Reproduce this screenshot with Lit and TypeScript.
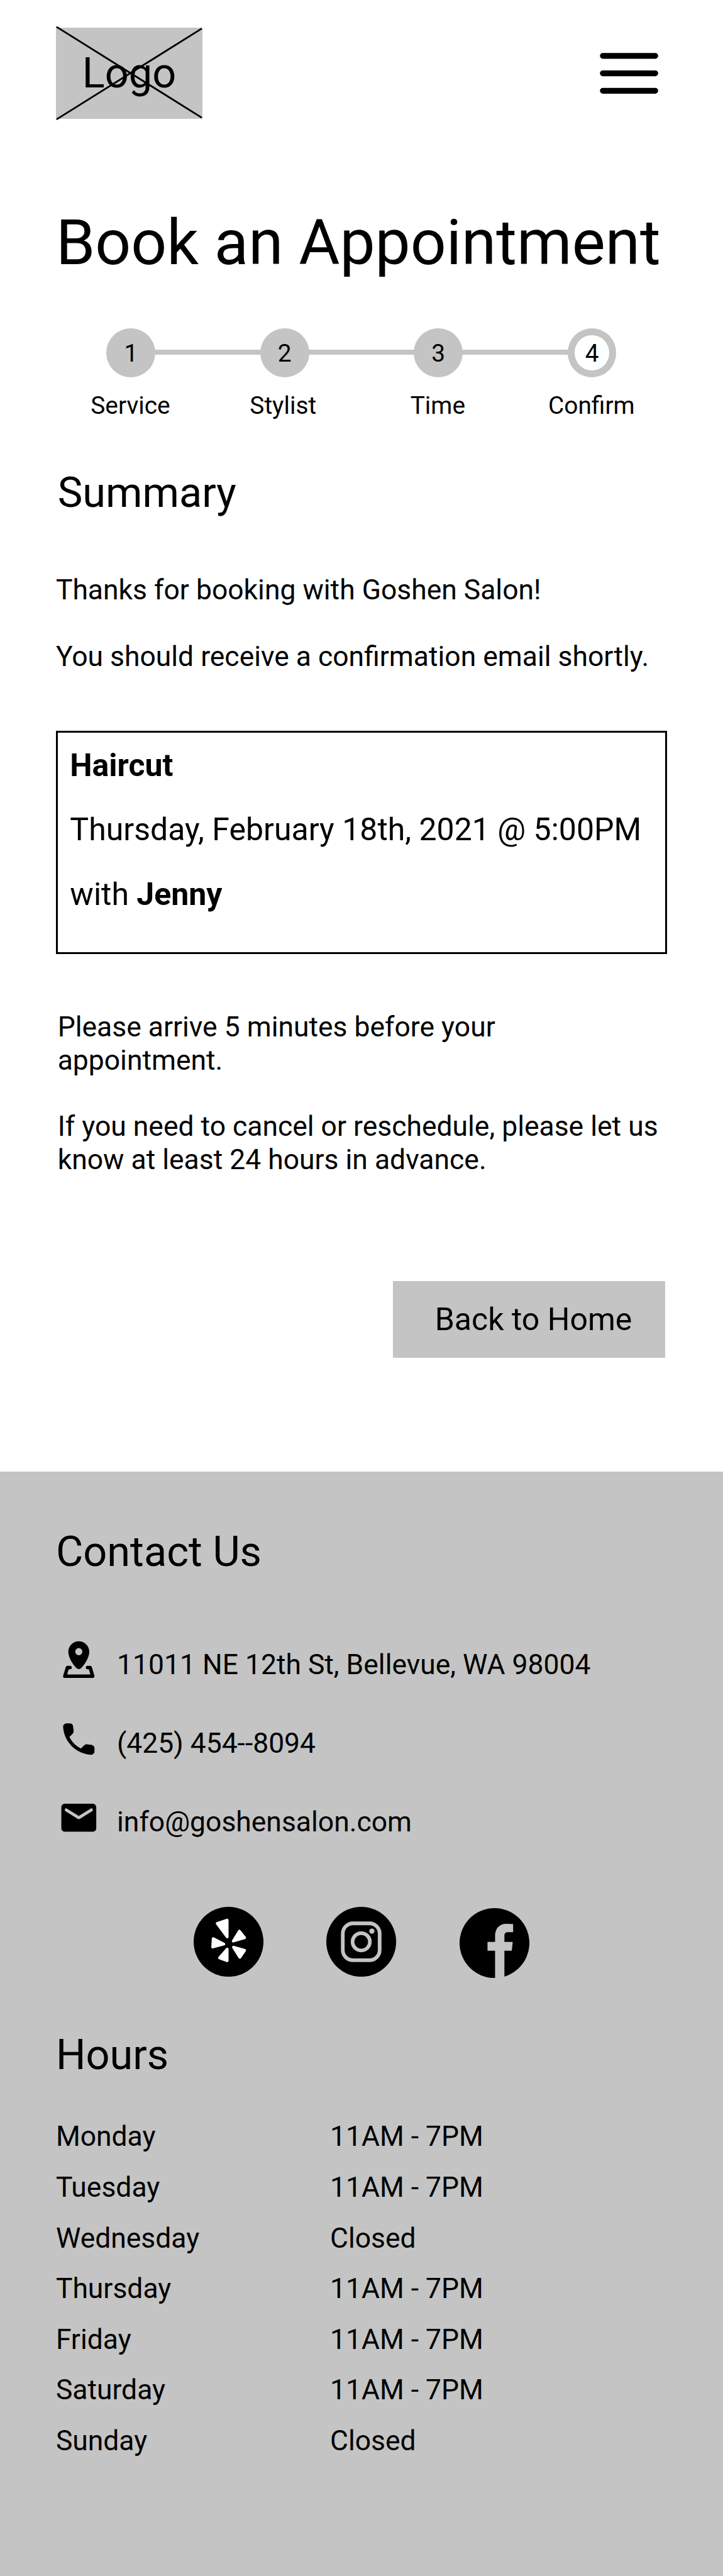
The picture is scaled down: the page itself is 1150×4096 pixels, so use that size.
import { LitElement, html, css, svg, unsafeCSS } from "lit";
import { customElement, property } from "lit/decorators.js";

// The layout is specified on a 414 x 1474 design grid.
// x() converts horizontal lengths and type sizes, y() vertical lengths.
const x = (n: number) => unsafeCSS(((n * 1150) / 414).toFixed(3) + "px");
const y = (n: number) => unsafeCSS(((n * 4096) / 1474).toFixed(3) + "px");

const GREY = unsafeCSS("#c4c4c4");

const shared = css`
  :host {
    display: block;
    font-family: Roboto, "Liberation Sans", sans-serif;
    color: #000;
  }
  * {
    box-sizing: border-box;
  }
  h1,
  h2,
  p,
  ul,
  ol,
  dl,
  dd,
  dt {
    margin: 0;
    padding: 0;
    font-weight: 400;
    list-style: none;
  }
  svg {
    display: block;
  }
  .section-title {
    font-size: ${x(24)};
    line-height: ${y(28)};
  }
  .body {
    font-size: ${x(16)};
    line-height: ${y(19)};
  }
`;

@customElement("site-header")
class SiteHeader extends LitElement {
  static styles = [
    shared,
    css`
      .bar {
        display: flex;
        justify-content: space-between;
        align-items: center;
        padding: ${y(16)} ${x(33.9)} 0 ${x(32)};
      }
      .logo {
        position: relative;
        width: ${x(84)};
        height: ${y(52)};
        background: ${GREY};
        display: flex;
        align-items: center;
        justify-content: center;
        font-size: ${x(24)};
        line-height: ${y(28)};
      }
      .cross {
        position: absolute;
        inset: 0;
        width: 100%;
        height: 100%;
        overflow: visible;
      }
      .menu {
        border: 0;
        padding: 0;
        background: none;
      }
      .menu svg {
        width: ${x(40)};
        height: ${x(40)};
      }
    `,
  ];

  render() {
    return html`
      <header class="bar">
        <div class="logo">
          Logo
          <svg class="cross" viewBox="0 0 84 52" preserveAspectRatio="none">
            <path d="M.3-.5L83.5 51.5M.3 52.5L83.5.5" stroke="#000" fill="none" />
          </svg>
        </div>
        <button class="menu" aria-label="Menu">
          <svg viewBox="0 0 24 24" fill="none" stroke="#000" stroke-width="2" stroke-linecap="round">
            <path d="M3 6h18M3 12h18M3 18h18" />
          </svg>
        </button>
      </header>
    `;
  }
}

@customElement("booking-steps")
class BookingSteps extends LitElement {
  @property({ type: Array }) steps: string[] = [];
  @property({ type: Number }) current = 0;

  static styles = [
    shared,
    css`
      .track {
        display: flex;
        padding-left: ${x(61)};
      }
      .dot {
        width: ${x(28)};
        height: ${y(28)};
        border-radius: 50%;
        border: ${x(4)} solid ${GREY};
        background: ${GREY};
        display: flex;
        align-items: center;
        justify-content: center;
        padding-top: 1px;
        font-size: ${x(14)};
        line-height: ${y(16)};
      }
      .dot.current {
        background: #fff;
      }
      .line {
        width: ${x(60)};
        height: ${y(3)};
        margin: ${y(12)} -1px 0;
        flex: none;
        background: ${GREY};
        box-sizing: content-box;
        border: 0 solid ${GREY};
        border-width: 0 1px;
      }
      .labels {
        display: grid;
        grid-template-columns: repeat(4, ${x(88)});
        margin-top: ${y(8.3)};
        padding-left: ${x(30.7)};
        text-align: center;
        font-size: ${x(14)};
        line-height: ${y(16)};
      }
      .labels li:nth-child(2) {
        padding-right: ${x(1.2)};
      }
    `,
  ];

  render() {
    return html`
      <div class="track">
        ${this.steps.map(
          (_, i) => html`${i > 0 ? html`<span class="line"></span>` : ""}<span
              class=${i === this.current ? "dot current" : "dot"}
              >${i + 1}</span
            >`
        )}
      </div>
      <ol class="labels">
        ${this.steps.map((s) => html`<li>${s}</li>`)}
      </ol>
    `;
  }
}

const icons: Record<string, unknown> = {
  pin: svg`
    <path fill-rule="evenodd" d="M12 1C8.7 1 6 3.7 6 7c0 3.6 3 7.6 4.6 9.3a1.9 1.9 0 0 0 2.8 0C15 14.600 18 10.600 18 7c0-3.300-2.700-6-6-6zm0 8a2.050 2.050 0 1 1 0-4.100 2.050 2.050 0 0 1 0 4.100z"/>
    <path d="M7 16H5.500L4 21H20L18.500 16H17" fill="none" stroke="#000" stroke-width="2" stroke-linecap="round" stroke-linejoin="round"/>`,
  phone: svg`<path d="M19.23 15.26l-2.54-.29a1.99 1.99 0 0 0-1.64.57l-1.84 1.84a15.045 15.045 0 0 1-6.59-6.590l1.850-1.850c.43-.43.64-1.030.57-1.640l-.29-2.520a2.001 2.001 0 0 0-1.990-1.770H5.030c-1.130 0-2.070.94-2 2.070.53 8.540 7.360 15.360 15.890 15.890 1.130.07 2.070-.87 2.070-2v-1.730c.01-1.010-.75-1.860-1.760-1.980z"/>`,
  mail: svg`<path d="M20 4H4c-1.100 0-2 .9-2 2v12c0 1.100.9 2 2 2h16c1.100 0 2-.9 2-2V6c0-1.100-.9-2-2-2zm-.4 4.250l-7.070 4.420c-.32.2-.74.2-1.060 0L4.400 8.250a.85.85 0 1 1 .9-1.440L12 11l6.700-4.190a.85.85 0 1 1 .9 1.440z"/>`,
  yelp: svg`
    <circle cx="20" cy="20" r="20"/>
    <g fill="#fff" stroke="#fff" stroke-width="1.6" stroke-linejoin="round">
      <path d="M13.500 9.500L19.200 7.600V17.200z"/>
      <path d="M26.200 13.900L29.200 17.700L22.700 19.600z"/>
      <path d="M22.800 23.100L29.200 24.900L26.450 28.900z"/>
      <path d="M19.200 24.200L14.800 29.200L19.200 30.800z"/>
      <path d="M11.200 18.200L17.300 21.300L10.900 23z"/>
    </g>`,
  instagram: svg`
    <circle cx="20" cy="20" r="20"/>
    <g fill="none" stroke="#c4c4c4" stroke-width="2.1">
      <rect x="9.450" y="9.450" width="21.100" height="21.100" rx="5.800"/>
      <circle cx="20" cy="20" r="4.950"/>
    </g>
    <circle cx="26.100" cy="13.900" r="1.500" fill="#c4c4c4"/>`,
  facebook: svg`
    <circle cx="20" cy="20" r="20"/>
    <path fill="#c4c4c4" d="M20.330 41V24.400H16V19.330h4.330V15.900c0-4.300 2.560-6.900 6.500-6.900 1.300 0 3 .1 3.840.2v4.600h-3c-1.600 0-2 1-2 2v3.530h4.760l-.55 5.070h-4.210V41z"/>`,
};

@customElement("site-footer")
class SiteFooter extends LitElement {
  contacts = [
    { icon: "pin", text: "11011 NE 12th St, Bellevue, WA 98004" },
    { icon: "phone", text: "(425) 454--8094" },
    { icon: "mail", text: "info@goshensalon.com" },
  ];
  hours = [
    ["Monday", "11AM - 7PM"],
    ["Tuesday", "11AM - 7PM"],
    ["Wednesday", "Closed"],
    ["Thursday", "11AM - 7PM"],
    ["Friday", "11AM - 7PM"],
    ["Saturday", "11AM - 7PM"],
    ["Sunday", "Closed"],
  ];

  static styles = [
    shared,
    css`
      .footer {
        height: ${y(632)};
        padding: ${y(32)} ${x(32)} 0;
        background: ${GREY};
      }
      .contacts {
        display: flex;
        flex-direction: column;
        gap: ${y(21)};
        margin-top: ${y(36)};
        padding-left: ${x(1)};
      }
      .contact {
        display: flex;
        gap: ${x(10)};
        height: ${y(24)};
      }
      .contact svg {
        width: ${x(24)};
        height: ${x(24)};
      }
      .contact span {
        padding-top: ${y(5.35)};
      }
      .social {
        display: flex;
        justify-content: center;
        gap: ${x(36)};
        margin-top: ${y(39)};
      }
      .social svg {
        width: ${x(40)};
        height: ${x(40)};
      }
      .facebook {
        margin-top: ${y(1)};
      }
      .hours-title {
        margin-top: ${y(30)};
      }
      .hours {
        display: grid;
        grid-template-columns: ${x(157)} 1fr;
        row-gap: ${y(10)};
        margin-top: ${y(23.3)};
      }
    `,
  ];

  render() {
    return html`
      <footer class="footer">
        <h2 class="section-title">Contact Us</h2>
        <ul class="contacts body">
          ${this.contacts.map(
            (c) => html`<li class="contact">
              <svg viewBox="0 0 24 24">${icons[c.icon]}</svg>
              <span>${c.text}</span>
            </li>`
          )}
        </ul>
        <div class="social">
          ${["yelp", "instagram", "facebook"].map(
            (n) => html`<a class=${n} aria-label=${n}><svg viewBox="0 0 40 40">${icons[n]}</svg></a>`
          )}
        </div>
        <h2 class="section-title hours-title">Hours</h2>
        <dl class="hours body">
          ${this.hours.map(([day, time]) => html`<dt>${day}</dt><dd>${time}</dd>`)}
        </dl>
      </footer>
    `;
  }
}

@customElement("app-root")
class AppRoot extends LitElement {
  static styles = [
    shared,
    css`
      :host {
        width: 1150px;
        background: #fff;
      }
      .page {
        display: flex;
        flex-direction: column;
        height: ${y(842)};
      }
      .title {
        margin: ${y(50)} 0 ${y(28)} ${x(32)};
        font-size: ${x(36)};
        line-height: ${y(42)};
        white-space: nowrap;
      }
      .summary {
        margin: ${y(27.7)} 0 0 ${x(33)};
      }
      .thanks {
        display: flex;
        flex-direction: column;
        gap: ${y(19)};
        margin: ${y(32.35)} 0 0 ${x(32)};
      }
      .card {
        width: ${x(350)};
        height: ${y(128)};
        margin: ${y(32.65)} 0 0 ${x(32)};
        padding: ${y(0.4)} 0 0 ${x(7)};
        border: 3px solid #000;
        font-size: ${x(18)};
        line-height: ${y(37)};
        white-space: nowrap;
      }
      .card b {
        font-weight: 700;
      }
      .notes {
        display: flex;
        flex-direction: column;
        gap: ${y(19)};
        width: ${x(349)};
        margin: ${y(32.35)} 0 0 ${x(33)};
      }
      .arrive {
        width: ${x(300)};
      }
      .home {
        align-self: flex-end;
        width: ${x(156)};
        height: ${y(44)};
        margin: ${y(59.65)} ${x(33)} 0 0;
        padding: 0 0 0 ${x(24)};
        border: 0;
        border-radius: 0;
        background: ${GREY};
        font: inherit;
        color: inherit;
        text-align: left;
        font-size: ${x(18)};
        line-height: ${y(21)};
      }
    `,
  ];

  render() {
    return html`
      <main class="page">
        <site-header></site-header>
        <h1 class="title">Book an Appointment</h1>
        <booking-steps .steps=${["Service", "Stylist", "Time", "Confirm"]} .current=${3}></booking-steps>
        <h2 class="section-title summary">Summary</h2>
        <div class="thanks body">
          <p>Thanks for booking with Goshen Salon!</p>
          <p>You should receive a confirmation email shortly.</p>
        </div>
        <section class="card">
          <p><b>Haircut</b></p>
          <p>Thursday, February 18th, 2021 @ 5:00PM</p>
          <p>with <b>Jenny</b></p>
        </section>
        <div class="notes body">
          <p class="arrive">Please arrive 5 minutes before your appointment.</p>
          <p>If you need to cancel or reschedule, please let us know at least 24 hours in advance.</p>
        </div>
        <button class="home">Back to Home</button>
      </main>
      <site-footer></site-footer>
    `;
  }
}
